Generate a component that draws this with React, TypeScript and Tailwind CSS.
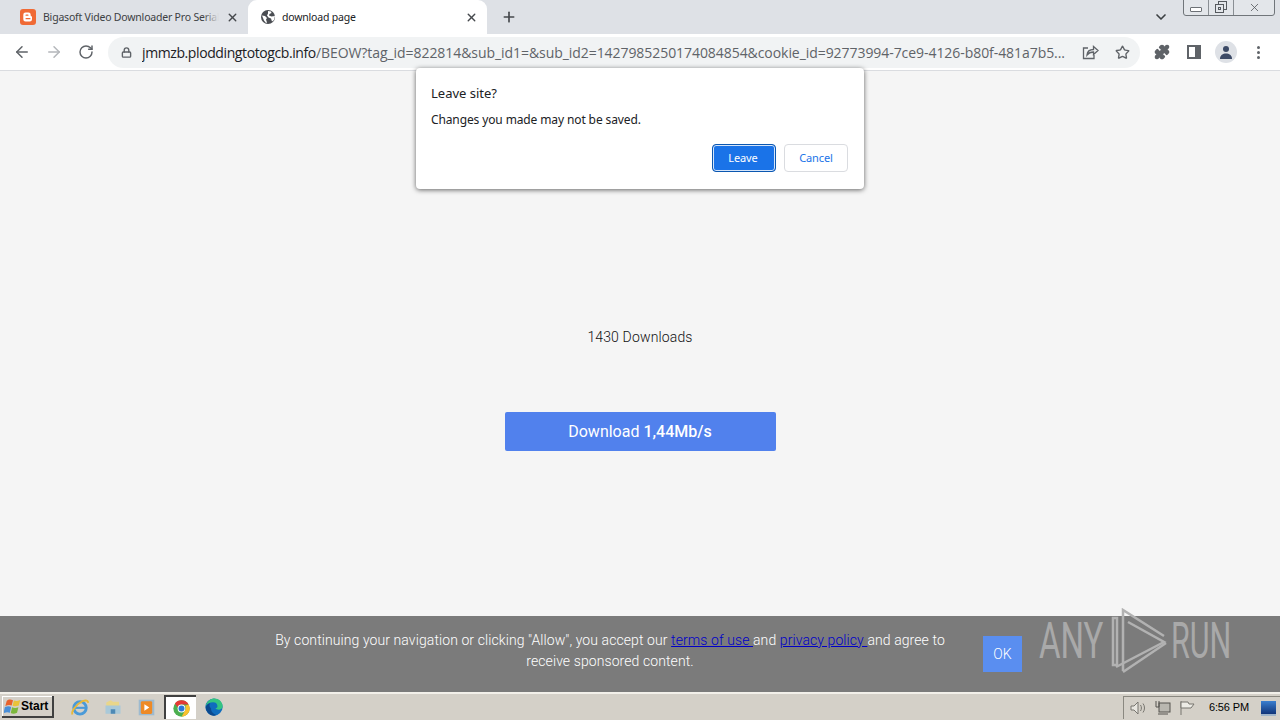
import React from "react";
import { ArrowLeft, ArrowRight, RotateCw, Lock, Star, X, Plus, ChevronDown, Puzzle } from "lucide-react";

const BloggerIcon = () => (
  <svg width="16" height="16" viewBox="0 0 16 16">
    <rect width="16" height="16" rx="3" fill="#f06a35" />
    <path d="M5.500 3.500h3a2.200 2.200 0 0 1 2.200 2.200v.8c0 .4.300.7.700.7.300 0 .6.300.6.6v2.500a2.200 2.200 0 0 1-2.200 2.200H5.500a2.200 2.200 0 0 1-2.200-2.200V5.700a2.200 2.200 0 0 1 2.200-2.200z" fill="#fff" />
    <rect x="5.500" y="5.500" width="3" height="1.300" rx=".6" fill="#f06a35" />
    <rect x="5.500" y="9" width="5" height="1.300" rx=".6" fill="#f06a35" />
  </svg>
);

const GlobeIcon = () => (
  <svg width="16" height="16" viewBox="0 0 16 16">
    <circle cx="8" cy="8" r="7" fill="#4a4d52" />
    <path d="M2 6.500l3 .5 2 2-1 1.500 1 3-1 .5-2-2.500zM8 2l3 .5.500 1.500-2 1-.5 1.500 2.500 1 3.500-.5-1 4-2 1.500-1-3-2.500-1-1.500-2 1-2z" fill="#fff" />
  </svg>
);

const ShareIcon = () => (
  <svg width="17" height="16" viewBox="0 0 17 16" fill="none" stroke="#5f6368" strokeWidth="1.300">
    <path d="M6 4H1.500v10.500H12V11" />
    <path d="M5 11c.3-3.500 3-5.500 6.500-5.500V2.500l4.500 4-4.500 4V8C8.500 8 6.500 9 5 11z" />
  </svg>
);

const ChromeIcon = () => (
  <svg width="17" height="17" viewBox="0 0 24 24">
    <circle cx="12" cy="12" r="11.500" fill="#4caf50" />
    <path d="M12 .5a11.500 11.500 0 0 1 10 5.750H12a5.750 5.750 0 0 0-5.500 4L2.700 5.200A11.500 11.500 0 0 1 12 .5z" fill="#e53935" />
    <path d="M22 6.250A11.500 11.500 0 0 1 12 23.500l4.800-8.500A5.750 5.750 0 0 0 17 8z" fill="#fbc02d" />
    <circle cx="12" cy="12" r="5.500" fill="#fff" />
    <circle cx="12" cy="12" r="4.200" fill="#2a78d8" />
  </svg>
);

const EdgeIcon = () => (
  <svg width="18" height="18" viewBox="0 0 24 24">
    <circle cx="12" cy="12" r="11.500" fill="#0f6cbd" />
    <path d="M1 11C2 4 8 .5 12.500.5 18.500.5 23.500 5 23.500 11c0 3-2.500 4.500-5 4.500-2 0-4-.7-4.500-1.500 2-.5 3-2 2.500-4C16 7 14 5.500 11 5.500 6 5.500 2.500 8 1 11z" fill="#33c481" />
    <path d="M8 14c0 4 3 7.500 7 8.500-1 .7-2 1-3 1C6 23.500 1 18.500 1 12c1-3 4-5 6-5-1.500 2-1 3-1 4z" fill="#0b4a8f" />
  </svg>
);

const IeIcon = () => (
  <svg width="20" height="20" viewBox="0 0 24 24" fill="none">
    <circle cx="12" cy="13" r="7.500" stroke="#4a9ad8" strokeWidth="3.500" />
    <path d="M5 13h14" stroke="#4a9ad8" strokeWidth="2.500" />
    <path d="M3 21c-2-3 4-12 12-16 4-1.500 7-1 6.500 2" stroke="#e8b93a" strokeWidth="2.200" />
  </svg>
);

const FolderIcon = () => (
  <svg width="18" height="18" viewBox="0 0 24 24">
    <path d="M3 6l6-3 3 2h8v15H3z" fill="#e9d68a" />
    <path d="M2 10h20v11H2z" fill="#a9c9d9" />
    <path d="M9 21v-6h6v6z" fill="#4d89b5" />
  </svg>
);

const MediaIcon = () => (
  <svg width="17" height="17" viewBox="0 0 24 24">
    <rect x="1" y="1" width="22" height="22" fill="#9dbad0" />
    <rect x="4" y="3" width="16" height="18" rx="2" fill="#ee8a26" />
    <path d="M9 7.500l7 4.500-7 4.500z" fill="#fff" />
  </svg>
);

const WinFlag = () => (
  <svg width="18" height="17" viewBox="0 0 20 18">
    <path d="M3 3c2-2 4-2 7-1L8.500 8c-2-.8-4-.8-7 .5z" fill="#e8622c" />
    <path d="M11 2.300c2 .8 4 .8 7-.5L16.500 8c-3 1-4.500 1-7 .2z" fill="#e9c23a" />
    <path d="M1 9.500c3-1 5-1 7 0L6.500 16c-2-1-4-1-7 .3z" fill="#4a8fd8" />
    <path d="M9 9.800c2.500 1 4 1 7 0L14.500 16c-3 1.200-5 1.200-7 .3z" fill="#7cb83c" />
  </svg>
);

const AnyRunMark = () => (
  <svg width="58" height="66" viewBox="0 0 58 66" fill="none" stroke="#b2b2b2" strokeWidth="2.500">
    <path d="M3 10v47h4V10z" />
    <path d="M13 63V2l41 26" />
    <path d="M18 14l36 20-48 25" />
    <path d="M13 64l43-29" />
  </svg>
);

const Toolbar = () => (
  <div className="flex h-[37px] items-center border-b border-[#dadce0] bg-white">
    <ArrowLeft size={18} strokeWidth={2} className="ml-[13px] shrink-0 text-[#5f6368]" />
    <ArrowRight size={18} strokeWidth={2} className="ml-[14px] shrink-0 text-[#b4b7bb]" />
    <RotateCw size={16} strokeWidth={2.200} className="ml-[15px] shrink-0 text-[#5f6368]" />
    <div className="ml-[14px] flex h-[31px] w-[1032px] shrink-0 items-center rounded-full bg-[#f1f3f4] pl-[13px]">
      <Lock size={11} strokeWidth={3} className="shrink-0 text-[#5f6368]" />
      <div className="ml-[10px] w-[925px] shrink-0 truncate text-[14px] text-[#5f6368] [font-family:'Open_Sans',sans-serif] tracking-[-0.06px]">
        <span className="text-[#202124] tracking-[-0.4px]">jmmzb.ploddingtotogcb.info</span>
        /BEOW?tag_id=822814&sub_id1=&sub_id2=1427985250174084854&cookie_id=92773994-7ce9-4126-b80f-481a7b5...
      </div>
      <div className="ml-[15px] shrink-0"><ShareIcon /></div>
      <Star size={15} strokeWidth={2.200} className="ml-[16px] shrink-0 text-[#5f6368]" />
    </div>
    <Puzzle size={16} fill="#5f6368" className="ml-[14px] shrink-0 text-[#5f6368]" />
    <div className="ml-[17px] flex h-[14px] w-[14px] shrink-0 justify-end border-2 border-[#5f6368] bg-white">
      <div className="h-full w-[4px] bg-[#5f6368]" />
    </div>
    <div className="ml-[14px] flex h-[22px] w-[22px] shrink-0 items-center justify-center overflow-hidden rounded-full bg-[#dee1e6]">
      <svg width="14" height="14" viewBox="0 0 14 14">
        <circle cx="7" cy="4" r="3" fill="#3c4a66" />
        <path d="M1 14c0-4 3-5.500 6-5.500s6 1.500 6 5.500z" fill="#3c4a66" />
      </svg>
    </div>
    <div className="ml-[20px] flex shrink-0 flex-col gap-[2px]">
      <div className="h-[3px] w-[3px] rounded-full bg-[#5f6368]" />
      <div className="h-[3px] w-[3px] rounded-full bg-[#5f6368]" />
      <div className="h-[3px] w-[3px] rounded-full bg-[#5f6368]" />
    </div>
  </div>
);

const TabStrip = () => (
  <div className="relative flex h-[34px] items-end bg-[#dee1e6] text-[10.5px] tracking-[-0.2px] [font-family:'Noto_Sans',sans-serif] text-[#3c4043]">
    <div className="flex h-[34px] w-[248px] items-center pl-[20px]">
      <BloggerIcon />
      <div className="relative ml-[7px] w-[176px] overflow-hidden whitespace-nowrap pt-px">
        Bigasoft Video Downloader Pro Serial
        <div className="absolute inset-y-0 right-0 w-[16px] bg-gradient-to-r from-transparent to-[#dee1e6]" />
      </div>
      <X size={13} strokeWidth={2.500} className="ml-[7px] text-[#45484c]" />
    </div>
    <div className="flex h-[34px] w-[239px] items-center rounded-t-[9px] bg-white pl-[12px] text-[#202124]">
      <GlobeIcon />
      <span className="ml-[6px] w-[183px] pt-px">download page</span>
      <X size={13} strokeWidth={2.500} className="text-[#45484c]" />
    </div>
    <Plus size={16} strokeWidth={2.500} className="mb-[9px] ml-[14px] text-[#45484c]" />
    <ChevronDown size={16} strokeWidth={2.500} className="mb-[9px] ml-[636px] text-[#3c4043]" />
    <div className="absolute right-[5px] top-[-1px] flex h-[17px] w-[92px] rounded-b-[3px] border border-[#70757a] bg-[#e3e6ea]">
      <div className="flex w-[25px] items-center justify-center border-r border-[#8a8f94]">
        <div className="mt-[4px] h-[5px] w-[12px] rounded-[1px] border border-[#6d7176] bg-white" />
      </div>
      <div className="relative flex w-[25px] items-center justify-center border-r border-[#8a8f94]">
        <div className="absolute left-[9px] top-[1px] h-[9px] w-[9px] border border-[#55595e]" />
        <div className="absolute left-[6px] top-[4px] flex h-[9px] w-[9px] items-center justify-center border border-[#55595e] bg-[#e3e6ea]">
          <div className="h-[3px] w-[3px] border border-[#55595e]" />
        </div>
      </div>
      <div className="flex flex-1 items-center justify-center">
        <X size={13} strokeWidth={1.500} className="text-[#55595e]" />
      </div>
    </div>
  </div>
);

const LeaveDialog = () => (
  <div className="absolute left-[416px] top-[68px] h-[121px] w-[448px] rounded-[4px] bg-white pl-[15px] pr-[16px] pt-[16px] text-[#202124] shadow-[0_1px_5px_rgba(0,0,0,0.6)] [font-family:'Noto_Sans',sans-serif]">
    <div className="text-[13px] leading-[18px]">Leave site?</div>
    <div className="mt-[9px] text-[12px] leading-[18px] tracking-[-0.12px]">Changes you made may not be saved.</div>
    <div className="mt-[15px] flex justify-end gap-[8px] text-[11px] tracking-[-0.1px]">
      <button className="h-[28px] w-[64px] rounded-[4px] border border-[#0b57b0] bg-[#1a73e8] pr-[2px] text-white shadow-[inset_0_0_0_1px_#d5e5fa]">Leave</button>
      <button className="h-[28px] w-[64px] rounded-[4px] border border-[#dadce0] bg-white text-[#1a73e8]">Cancel</button>
    </div>
  </div>
);

const ConsentBar = () => (
  <div className="relative flex h-[76px] items-center bg-[#7b7b7b] [font-family:'Roboto',sans-serif] text-white">
    <p className="mb-[6px] ml-[270px] w-[680px] text-center text-[14px] leading-[21px] font-light tracking-[0.09px]">
      By continuing your navigation or clicking "Allow", you accept our{" "}
      <a className="text-[#0000c8] underline">terms of use </a>and{" "}
      <a className="text-[#0000c8] underline">privacy policy </a>and agree to receive sponsored content.
    </p>
    <button className="ml-[33px] h-[36px] w-[39px] bg-[#5a8ef0] text-[14px] font-light">OK</button>
    <div className="pointer-events-none absolute left-[1039px] top-[-8px] flex h-[66px] items-center text-[#a9a9a9]">
      <span className="w-[71px] origin-left scale-x-[0.66] text-[50px] leading-none">ANY</span>
      <AnyRunMark />
      <span className="ml-[3px] w-[60px] origin-left scale-x-[0.61] text-[50px] leading-none">RUN</span>
    </div>
  </div>
);

const Taskbar = () => (
  <div className="flex h-[28px] items-center border-t-2 border-[#f2f0ea] bg-[#d4d0c8]">
    <button className="ml-[2px] flex h-[22px] w-[52px] items-center border-b-2 border-r-2 border-[#404040] bg-[#d4d0c8] pl-[2px] text-[12px] font-bold text-black shadow-[inset_1px_1px_0_#fff] [font-family:'Liberation_Sans',sans-serif]">
      <WinFlag />
      <span className="ml-[-1px]">Start</span>
    </button>
    <div className="ml-[16px]"><IeIcon /></div>
    <div className="ml-[14px]"><FolderIcon /></div>
    <div className="ml-[16px]"><MediaIcon /></div>
    <div className="ml-[9px] flex h-[24px] w-[32px] items-center justify-center border-l-2 border-t-2 border-[#404040] bg-white">
      <ChromeIcon />
    </div>
    <div className="ml-[9px]"><EdgeIcon /></div>
    <div className="ml-auto flex h-[23px] w-[157px] items-center border-l border-t border-[#8a8880] pl-[6px] text-[11px] tracking-[-0.15px] text-black [font-family:'Liberation_Sans',sans-serif]">
      <svg className="shrink-0" width="16" height="16" viewBox="0 0 16 16" fill="none" stroke="#77756f">
        <path d="M1 6h3l4-4v12l-4-4H1z" fill="#e8e6e0" />
        <path d="M10.500 5c1.200 1.800 1.200 4.200 0 6M13 3.500c2 2.500 2 6.500 0 9" />
      </svg>
      <svg className="ml-[8px] shrink-0" width="17" height="16" viewBox="0 0 17 16" fill="none" stroke="#55534e">
        <rect x="5" y="3" width="11" height="9" fill="#b9b7b0" />
        <path d="M4 14h10M2 1v6h3V1" />
      </svg>
      <svg className="ml-[8px] shrink-0" width="16" height="16" viewBox="0 0 16 16" fill="none" stroke="#77756f">
        <path d="M2 1v14" />
        <path d="M2 2h7l1 2h5l-3 4H2z" fill="#ecebe5" />
      </svg>
      <span className="ml-[14px] whitespace-nowrap">6:56 PM</span>
      <div className="ml-[12px] h-[13px] w-[15px] shrink-0 bg-gradient-to-b from-[#3a7fd0] to-[#12357a] shadow-[0_2px_0_#9fb4c9]" />
    </div>
  </div>
);

const App: React.FC = () => {
  return (
    <div className="relative flex h-screen w-[1280px] flex-col overflow-hidden bg-[#f5f5f5]">
      <TabStrip />
      <Toolbar />
      <main className="flex flex-1 flex-col items-center pt-[256px] [font-family:'Roboto',sans-serif]">
        <div className="text-[14px] leading-[20px] font-light tracking-[0.15px] text-[#111]">1430 Downloads</div>
        <button className="mt-[65px] h-[39px] w-[271px] rounded-[2px] bg-[#5181ed] text-[16px] text-white">
          Download <span className="font-medium">1,44Mb/s</span>
        </button>
      </main>
      <ConsentBar />
      <Taskbar />
      <LeaveDialog />
    </div>
  );
};

export default App;
